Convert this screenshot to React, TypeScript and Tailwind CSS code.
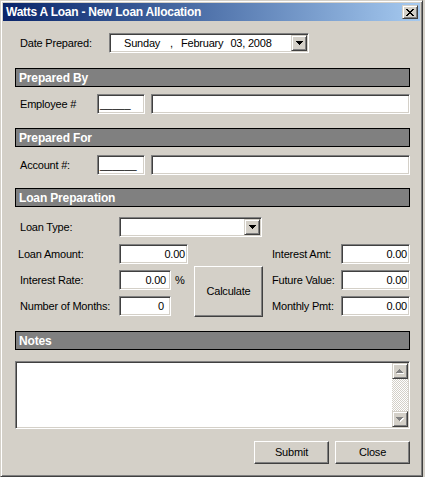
import React from "react";

const sunken =
  "border border-t-[#808080] border-l-[#808080] border-b-white border-r-white shadow-[inset_1px_1px_0_#404040,inset_-1px_-1px_0_#d4d0c8] bg-white";
const raised =
  "border border-t-white border-l-white border-b-[#404040] border-r-[#404040] shadow-[inset_-1px_-1px_0_#808080] bg-[#d4d0c8]";
const raised2 =
  "border border-t-[#d4d0c8] border-l-[#d4d0c8] border-b-[#404040] border-r-[#404040] shadow-[inset_1px_1px_0_#ffffff,inset_-1px_-1px_0_#808080] bg-[#d4d0c8]";

function DownTri({ color = "#000" }: { color?: string }) {
  return (
    <svg width="7" height="4" viewBox="0 0 7 4" shapeRendering="crispEdges">
      <rect x="0" y="0" width="7" height="1" fill={color} />
      <rect x="1" y="1" width="5" height="1" fill={color} />
      <rect x="2" y="2" width="3" height="1" fill={color} />
      <rect x="3" y="3" width="1" height="1" fill={color} />
    </svg>
  );
}

function DisabledTri({ up }: { up?: boolean }) {
  const rows = up
    ? [
        [3, 1],
        [2, 3],
        [1, 5],
        [0, 7],
      ]
    : [
        [0, 7],
        [1, 5],
        [2, 3],
        [3, 1],
      ];
  return (
    <svg width="8" height="5" viewBox="0 0 8 5" shapeRendering="crispEdges">
      {rows.map(([x, w], i) => (
        <rect key={"w" + i} x={x + 1} y={i + 1} width={w} height="1" fill="#ffffff" />
      ))}
      {rows.map(([x, w], i) => (
        <rect key={"g" + i} x={x} y={i} width={w} height="1" fill="#808080" />
      ))}
    </svg>
  );
}

function DropBtn() {
  return (
    <div className={`${raised2} ml-auto mr-[1px] w-[16px] h-[16px] flex items-center justify-center`}>
      <DownTri />
    </div>
  );
}

function Header({ title }: { title: string }) {
  return (
    <div className="h-[19px] w-[395px] bg-[#808080] border border-black pl-[3px] flex items-center text-white font-bold text-[12px] tracking-[-0.15px]">
      {title}
    </div>
  );
}

function Input({
  w,
  value,
  pr = "pr-[2px]",
}: {
  w: string;
  value?: string;
  pr?: string;
}) {
  return (
    <div className={`${sunken} ${w} h-[20px] flex items-center justify-end ${pr}`}>
      {value}
    </div>
  );
}

function XGlyph() {
  const rows = [
    [[0, 2], [6, 2]],
    [[1, 2], [5, 2]],
    [[2, 4]],
    [[3, 2]],
    [[2, 4]],
    [[1, 2], [5, 2]],
    [[0, 2], [6, 2]],
  ];
  return (
    <svg width="8" height="7" viewBox="0 0 8 7" shapeRendering="crispEdges">
      {rows.map((segs, y) =>
        segs.map(([x, w], i) => <rect key={y + "-" + i} x={x} y={y} width={w} height="1" fill="#000" />)
      )}
    </svg>
  );
}

export default function App() {
  return (
    <div className="w-[425px] h-[477px] bg-[#d4d0c8]">
      <div
        className="w-[423px] h-[477px] flex flex-col border border-t-[#d4d0c8] border-l-[#d4d0c8] border-b-[#404040] border-r-[#404040] shadow-[inset_1px_1px_0_#ffffff,inset_-1px_-1px_0_#808080] p-[2px] bg-[#d4d0c8] text-black text-[11px] tracking-[-0.2px]"
        style={{ fontFamily: '"Liberation Sans", Arial, sans-serif' }}
      >
        {/* Title bar */}
        <div className="h-[18px] bg-linear-to-r from-[#0a246a] to-[#a6caf0] flex items-center pl-[3px]">
          <span className="text-white font-bold text-[12px] tracking-[-0.25px]">
            Watts A Loan - New Loan Allocation
          </span>
          <div className={`${raised2} ml-auto mr-[2px] w-[16px] h-[14px] flex items-center justify-center`}>
            <XGlyph />
          </div>
        </div>

        {/* Body */}
        <div className="flex-1 pl-[12px] flex flex-col">
          {/* Date row */}
          <div className="mt-[12px] h-[20px] flex items-center">
            <span className="ml-[5px] w-[89px]">Date Prepared:</span>
            <div className={`${sunken} w-[200px] h-[20px] flex items-center`}>
              <span className="ml-[14px]">Sunday</span>
              <span className="ml-[10px]">,</span>
              <span className="ml-[8px]">February</span>
              <span className="ml-[7px]">03, 2008</span>
              <DropBtn />
            </div>
          </div>

          <div className="mt-[15px]">
            <Header title="Prepared By" />
          </div>
          <div className="mt-[7px] h-[20px] flex items-center">
            <span className="ml-[5px] w-[77px]">Employee #</span>
            <div className={`${sunken} w-[48px] h-[20px] flex items-center pl-[2px] tracking-normal`}>_____</div>
            <div className={`${sunken} ml-[6px] w-[259px] h-[20px]`} />
          </div>

          <div className="mt-[14px]">
            <Header title="Prepared For" />
          </div>
          <div className="mt-[8px] h-[20px] flex items-center">
            <span className="ml-[5px] w-[77px]">Account #:</span>
            <div className={`${sunken} w-[48px] h-[20px] flex items-center pl-[2px] tracking-normal`}>______</div>
            <div className={`${sunken} ml-[6px] w-[259px] h-[20px]`} />
          </div>

          <div className="mt-[13px]">
            <Header title="Loan Preparation" />
          </div>
          <div className="mt-[10px] h-[20px] flex items-center">
            <span className="ml-[5px] w-[99px]">Loan Type:</span>
            <div className={`${sunken} w-[143px] h-[20px] flex items-center`}>
              <DropBtn />
            </div>
          </div>

          <div className="mt-[7px] flex">
            <div className="w-[179px] flex flex-col gap-[6px]">
              <div className="h-[20px] flex items-center">
                <span className="ml-[3px] w-[101px]">Loan Amount:</span>
                <Input w="w-[69px]" value="0.00" pr="pr-[2px]" />
              </div>
              <div className="h-[20px] flex items-center">
                <span className="ml-[5px] w-[99px]">Interest Rate:</span>
                <Input w="w-[52px]" value="0.00" pr="pr-[4px]" />
                <span className="ml-[4px]">%</span>
              </div>
              <div className="h-[20px] flex items-center">
                <span className="ml-[5px] w-[99px]">Number of Months:</span>
                <Input w="w-[52px]" value="0" pr="pr-[6px]" />
              </div>
            </div>
            <div className={`${raised} mt-[22px] w-[69px] h-[51px] flex items-center justify-center`}>
              Calculate
            </div>
            <div className="pl-[9px] flex flex-col gap-[6px]">
              <div className="h-[20px] flex items-center">
                <span className="w-[69px]">Interest Amt:</span>
                <Input w="w-[69px]" value="0.00" pr="pr-[2px]" />
              </div>
              <div className="h-[20px] flex items-center">
                <span className="w-[69px]">Future Value:</span>
                <Input w="w-[69px]" value="0.00" pr="pr-[2px]" />
              </div>
              <div className="h-[20px] flex items-center">
                <span className="w-[69px]">Monthly Pmt:</span>
                <Input w="w-[69px]" value="0.00" pr="pr-[2px]" />
              </div>
            </div>
          </div>

          <div className="mt-[14px]">
            <Header title="Notes" />
          </div>
          <div className={`${sunken} mt-[11px] w-[395px] h-[68px] flex justify-end py-[1px] pr-[1px]`}>
            <div className="w-[16px] flex flex-col">
              <div className={`${raised2} h-[16px] flex items-center justify-center`}>
                <DisabledTri up />
              </div>
              <div className="flex-1 bg-[repeating-conic-gradient(#d4d0c8_0%_25%,#ffffff_0%_50%)] bg-[length:2px_2px]" />
              <div className={`${raised2} h-[16px] flex items-center justify-center`}>
                <DisabledTri />
              </div>
            </div>
          </div>

          <div className="mt-[12px] w-[395px] flex justify-end gap-[6px]">
            <div className={`${raised} w-[75px] h-[23px] flex items-center justify-center`}>Submit</div>
            <div className={`${raised} w-[75px] h-[23px] flex items-center justify-center`}>Close</div>
          </div>
        </div>
      </div>
    </div>
  );
}
